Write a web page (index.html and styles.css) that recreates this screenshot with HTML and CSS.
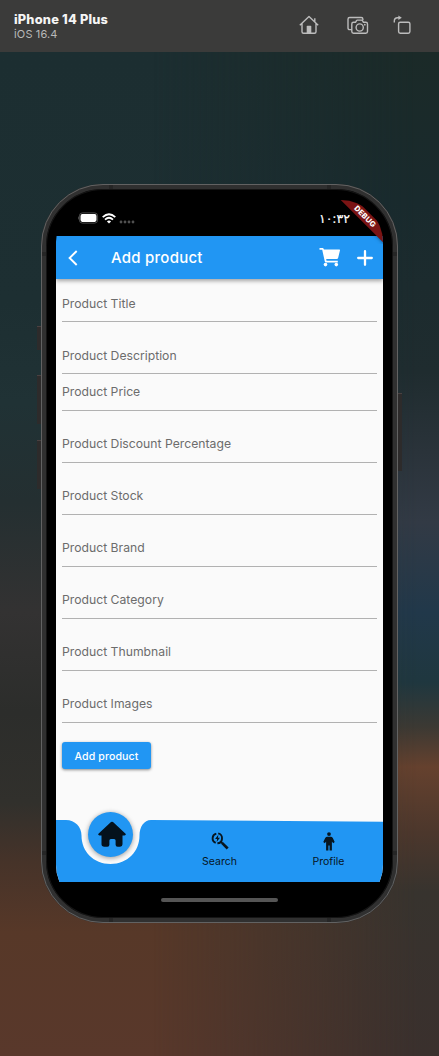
FILE: index.html
```html
<!DOCTYPE html>
<html lang="en">
<head>
<meta charset="utf-8">
<title>iPhone 14 Plus</title>
<link rel="stylesheet" href="styles.css">
</head>
<body>
<header class="toolbar">
  <div class="device-name">
    <div class="model">iPhone 14 Plus</div>
    <div class="os">iOS 16.4</div>
  </div>
  <div class="tools">
    <svg width="20" height="20" viewBox="0 0 20 20" class="line"><path d="M.8 10.200 10 1.600l9.200 8.600M3 8.500v8.200q0 1.500 1.500 1.500h11q1.500 0 1.500-1.500V8.500M15.800 6.500V3.300"/><path class="solid" d="M7.700 18v-6.500q0-.7.700-.7h3.200q.7 0 .7.700V18z"/></svg>
    <svg width="22" height="20" viewBox="0 0 22 20" class="line"><path d="M4.500 14.600H2.700Q1 14.600 1 12.900V4.200q0-1.700 1.700-1.700h11.500q1.700 0 1.700 1.700v.8M6.500 7.300h2l1-1.700q.3-.5.900-.5h4.200q.6 0 .9.500l1 1.700h2.300q1.700 0 1.700 1.700v7.500q0 1.700-1.700 1.700H6.500q-1.700 0-1.700-1.700V9q0-1.700 1.700-1.700z"/><circle cx="12.700" cy="12.500" r="3.600"/><circle class="solid" cx="17.800" cy="9.700" r=".9"/></svg>
    <svg width="18" height="20" viewBox="0 0 18 20" class="line"><rect x="5.600" y="7.200" width="11.300" height="11" rx="1.600"/><path d="M1.300 7.500V6q0-3.200 3.300-3.200h2"/><path class="solid" d="M5.400.6l3.400 2.200L5.400 5z"/></svg>
  </div>
</header>
<main class="desktop">
  <div class="phone">
    <i class="side-key mute"></i><i class="side-key up"></i><i class="side-key down"></i><i class="side-key power"></i>
    <i class="seam s1"></i><i class="seam s2"></i><i class="seam s3"></i><i class="seam s4"></i><i class="seam s5"></i><i class="seam s6"></i><i class="seam s7"></i><i class="seam s8"></i>
    <div class="screen">
      <div class="status">
        <div class="signals">
          <svg width="21" height="12" viewBox="0 0 21 12"><rect x="1.400" y=".9" width="18.200" height="10.200" rx="3" fill="none" stroke="#4b4b4b"/><rect x="2.500" y="2.100" width="16" height="7.800" rx="1.800" fill="#fff"/><path d="M.8 4.300v3.400Q0 7 0 6t.8-1.700z" fill="#5a5a5a"/></svg>
          <svg width="14" height="11" viewBox="0 0 14 11" fill="none" stroke="#fff" stroke-width="1.800"><path d="M.7 4.100Q7-1.700 13.300 4.100M3 6.600q4-3.600 8 0"/><path d="M4.900 8.400Q7 6.700 9.100 8.400L7 10.600z" fill="#fff" stroke="none"/></svg>
          <svg width="16" height="4" viewBox="0 0 16 4" fill="#505050"><circle cx="2" cy="2" r="1.400"/><circle cx="6" cy="2" r="1.400"/><circle cx="10" cy="2" r="1.400"/><circle cx="14" cy="2" r="1.400"/></svg>
        </div>
        <div class="clock">۱۰:۳۲</div>
      </div>
      <div class="appbar">
        <svg class="back" width="10" height="16" viewBox="0 0 10 16"><path d="M8.700 1 1.600 8l7.100 7" fill="none" stroke="#fff" stroke-width="1.900"/></svg>
        <h1>Add product</h1>
        <svg class="cart" width="22" height="20" viewBox="0 0 22 20" fill="#fff"><path d="M.5 1h3.600l.9 1.500h15.400q.8 0 .6.800l-1.900 7.800q-.3 1-1.300 1H7.200l.3 1.700h11.300v1.600H6.700q-.7 0-.9-.8L3.200 2.700H.5z"/><circle cx="6.500" cy="17.600" r="1.800"/><circle cx="17.300" cy="17.600" r="1.800"/></svg>
        <svg class="plus" width="16" height="16" viewBox="0 0 16 16"><path d="M8 1.200v13.600M1.200 8h13.600" stroke="#fff" stroke-width="2.300" stroke-linecap="round"/></svg>
      </div>
      <form class="form">
        <label class="field">Product Title</label>
        <label class="field">Product Description</label>
        <label class="field tight">Product Price</label>
        <label class="field">Product Discount Percentage</label>
        <label class="field">Product Stock</label>
        <label class="field">Product Brand</label>
        <label class="field">Product Category</label>
        <label class="field">Product Thumbnail</label>
        <label class="field">Product Images</label>
        <button type="button" class="submit">Add product</button>
      </form>
      <nav class="tabs">
        <svg class="tabs-shape" width="327" height="63" viewBox="0 0 327 63"><path d="M0 1h10C19 1 25.500 8 25.500 16.500c0 16 12 28.500 29 28.500s29-12.500 29-28.500C83.500 8 88 1 95 1l232 1.800V63H0z" fill="#2196f3"/></svg>
        <div class="tab current"><span class="bubble"><svg width="28" height="26" viewBox="0 0 28 26" fill="#04121d"><path d="M13 1.100q1-.9 2 0l12.300 11.400q1.400 1.700-.9 2H24.500v8.800q0 2.400-2.400 2.400h-2.500q-2 0-2-2v-4.200q0-1.500-1.500-1.500h-3.200q-1.500 0-1.500 1.500v4.200q0 2-2 2H6.400Q3.500 25.700 3.500 23.300v-8.800H1.600q-2.300-.3-.9-2z"/></svg></span></div>
        <div class="tab"><svg width="18" height="18" viewBox="0 0 18 18" fill="none" stroke="#07151f"><path d="M5.300 1.600a4.900 4.900 0 0 0-.6 9.300M7.200 1.400a4.900 4.900 0 0 1 3.800 5.400 4.900 4.900 0 0 1-4.600 4.500" stroke-width="1.900"/><path d="m9.800 9.600 1.500 1.500" stroke-width="1.600"/><path d="m11 10.900 5.700 5.600" stroke-width="2.700"/><path d="M7.300 2.800 4.100 6.900h2L5.600 10 9 5.700H7z" fill="#07151f" stroke="none"/></svg><span>Search</span></div>
        <div class="tab"><svg width="12" height="19" viewBox="0 0 12 19" fill="#07151f"><circle cx="6" cy="2.100" r="1.900"/><path d="M4.200 4.800h3.600q1.300 0 2 1.300l1.900 4-1.500 1.200-1.300-1.900v9H6.600v-5H5.400v5H3.100v-9l-1.300 1.900L.3 10.100l1.900-4q.7-1.300 2-1.300z"/></svg><span>Profile</span></div>
      </nav>
      <div class="home-area"><i class="home-bar"></i></div>
      <div class="debug"><span>DEBUG</span></div>
    </div>
  </div>
</main>
</body>
</html>
```
FILE: styles.css
```css
* { box-sizing: border-box; }
body {
  margin: 0;
  height: 1056px;
  display: flex;
  flex-direction: column;
  font-family: Inter, "Noto Sans", sans-serif;
  overflow: hidden;
}
svg { display: block; flex: none; }
.toolbar {
  height: 52px;
  flex: none;
  background: #3b3b3a;
  display: flex;
  justify-content: space-between;
  padding: 12px 28px 0 14px;
}
.model { color: #f5f5f5; font-size: 12.800px; line-height: 15px; font-weight: 800; letter-spacing: .2px; }
.os { color: #b9b9b9; font-size: 11px; line-height: 14px; letter-spacing: .15px; }
.tools { display: flex; gap: 28px; padding-top: 3px; }
.tools svg:last-child { margin-left: -4px; }
.line { fill: none; stroke: #bcbcbc; stroke-width: 1.400; stroke-linejoin: round; }
.line .solid { fill: #bcbcbc; stroke: none; }

.desktop {
  position: relative;
  flex: 1;
  padding: 132px 41px 0;
  background: linear-gradient(#1c2e31 0, #1d2f32 250px, #203235 350px, #242f31 450px, #333232 560px, #2c2d2b 660px, #31302c 750px, #463329 810px, #573828 880px, #59382b 1004px);
}
.desktop::before {
  content: "";
  position: absolute;
  inset: 0;
  background: linear-gradient(#1b2a28 0, #192a2d 150px, #1f2c2f 320px, #2a333a 400px, #323a45 470px, #21384a 560px, #1f373f 630px, #3c3933 675px, #65412e 715px, #4c372c 780px, #37332e 840px, #3a302d 1004px);
  mask-image: linear-gradient(90deg, transparent 35%, #000 95%);
}
.phone {
  position: relative;
  width: 357px;
  height: 739px;
  padding: 11px 10px;
  border: 5px solid #303030;
  border-radius: 62px;
  background: #000;
  box-shadow: inset 0 0 0 1px #151515;
}
.phone::before {
  content: "";
  position: absolute;
  inset: -5px;
  border: 1px solid #626262;
  border-radius: 62px;
}
.side-key { position: absolute; width: 4px; left: -9px; background: #2d2b2b; border-top: 1px solid #4a4141; }
.mute { top: 137px; height: 24px; }
.up { top: 186px; height: 49px; }
.down { top: 251px; height: 49px; }
.power { top: 204px; height: 78px; left: 352px; }
.seam { position: absolute; background: #262626; }
.s1, .s2, .s3, .s4 { width: 4px; height: 4px; }
.s1 { left: 63px; top: -4px; }
.s2 { left: 281px; top: -4px; }
.s3 { left: 63px; bottom: -4px; }
.s4 { left: 281px; bottom: -4px; }
.s5, .s6, .s7, .s8 { width: 4px; height: 4px; }
.s5 { left: -4px; top: 63px; }
.s6 { right: -4px; top: 63px; }
.s7 { left: -4px; bottom: 63px; }
.s8 { right: -4px; bottom: 63px; }

.screen {
  position: relative;
  width: 327px;
  height: 707px;
  border-radius: 42px;
  overflow: hidden;
  display: flex;
  flex-direction: column;
  background: #000;
}
.status { height: 36px; flex: none; display: flex; justify-content: space-between; padding: 12px 33px 0 22px; }
.signals { display: flex; gap: 3px; }
.signals svg:nth-child(2) { margin-top: 1px; }
.signals svg:nth-child(3) { margin-top: 8px; }
.clock { color: #fff; font: 12.500px/14px "DejaVu Sans", sans-serif; direction: ltr; letter-spacing: -1.200px; -webkit-text-stroke: .2px #fff; }
.appbar {
  height: 43px;
  flex: none;
  z-index: 1;
  display: flex;
  align-items: center;
  padding: 0 10px 0 12px;
  background: #2196f3;
  box-shadow: 0 2px 4px rgba(0,0,0,.35);
}
.appbar h1 { margin: 0 auto 0 33px; color: #fff; font-size: 15px; font-weight: 500; letter-spacing: .25px; }
.cart { margin: -1px 16px 0 0; }
.form { flex: 1; background: #fafafa; padding: 0 6px; }
.field {
  display: flex;
  align-items: flex-end;
  height: 52px;
  padding-bottom: 10px;
  border-bottom: 1px solid #b1b1b1;
  color: #6c6c6c;
  font-size: 12.200px;
  line-height: 16px;
  letter-spacing: .01px;
}
.field:nth-child(-n+2) { padding-bottom: 9px; }
.field:first-child { height: 43px; }
.field.tight { height: 37px; }
.submit {
  display: block;
  width: 89px;
  height: 27px;
  margin-top: 19px;
  padding: 1px 0 0;
  border: 0;
  border-radius: 3px;
  background: #2196f3;
  box-shadow: 0 1px 3px rgba(0,0,0,.45);
  color: #fff;
  font: 500 10.600px Inter, sans-serif;
  letter-spacing: .1px;
}
.tabs { position: relative; height: 63px; flex: none; display: grid; grid-template-columns: repeat(3, 1fr); background: #fafafa; }
.tabs-shape { position: absolute; inset: 0; }
.tab { position: relative; display: flex; flex-direction: column; align-items: center; padding-top: 13px; color: #07151f; font-size: 10.500px; line-height: 14px; }
.tab span { margin-top: auto; margin-bottom: 13px; }
.tab.current { padding-top: 0; }
.tab .bubble {
  width: 45px;
  height: 45px;
  flex: none;
  margin: -7px 0 0;
  display: flex;
  align-items: center;
  justify-content: center;
  border-radius: 50%;
  background: #2196f3;
  box-shadow: 0 1px 5px rgba(0,0,0,.4);
}
.bubble svg { margin: -2px 0 0 3px; }
.home-area { height: 25px; flex: none; display: flex; justify-content: center; padding-top: 16px; background: #000; }
.home-bar { width: 117px; height: 4px; border-radius: 2px; background: #555; }
.debug { position: absolute; z-index: 2; top: 0; right: 0; width: 44px; height: 44px; overflow: hidden; }
.debug span {
  position: absolute;
  left: -14px;
  top: 11px;
  width: 80px;
  height: 11px;
  transform: rotate(45deg);
  background: #7b1414;
  box-shadow: 0 0 4px rgba(0,0,0,.5);
  color: #fff;
  font-size: 7.500px;
  line-height: 11px;
  font-weight: 800;
  letter-spacing: .2px;
  text-align: center;
}
```
